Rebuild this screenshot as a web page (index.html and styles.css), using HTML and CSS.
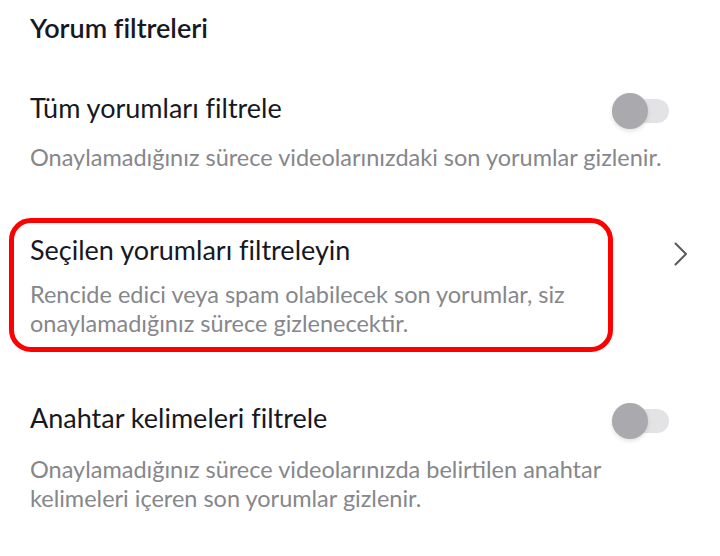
FILE: index.html
```html
<!DOCTYPE html>
<html lang="tr">
<head>
<meta charset="utf-8">
<link rel="stylesheet" href="styles.css">
</head>
<body>
<main class="page">
  <h1 class="title">Yorum filtreleri</h1>

  <section class="item item-first">
    <div class="row">
      <div class="heading">Tüm yorumları filtrele</div>
      <span class="toggle"><span class="knob"></span></span>
    </div>
    <p class="desc">Onaylamadığınız sürece videolarınızdaki son yorumlar gizlenir.</p>
  </section>

  <section class="item item-link">
    <div class="highlight">
      <div class="heading">Seçilen yorumları filtreleyin</div>
      <p class="desc">Rencide edici veya spam olabilecek son yorumlar, siz onaylamadığınız sürece gizlenecektir.</p>
    </div>
    <svg class="chevron" width="14" height="24" viewBox="0 0 14 24"><path d="M1.5 1.5 L12 12 L1.5 22.5" fill="none" stroke="#5a5a5e" stroke-width="2" stroke-linecap="round" stroke-linejoin="round"/></svg>
  </section>

  <section class="item item-last">
    <div class="row">
      <div class="heading">Anahtar kelimeleri filtrele</div>
      <span class="toggle"><span class="knob"></span></span>
    </div>
    <p class="desc">Onaylamadığınız sürece videolarınızda belirtilen anahtar kelimeleri içeren son yorumlar gizlenir.</p>
  </section>
</main>
</body>
</html>
```

FILE: styles.css
```css
* { box-sizing: border-box; }
html, body { margin: 0; padding: 0; background: #fff; }
body {
  font-family: "Lato", "Open Sans", sans-serif;
  color: #161823;
  width: 720px;
  height: 556px;
  overflow: hidden;
}
.page {
  padding: 11px 51px 0 30px;
  display: flex;
  flex-direction: column;
}
.title {
  margin: 0;
  font-size: 27px;
  font-weight: 600;
  line-height: 34px;
  color: #161823;
}
.item { display: flex; flex-direction: column; }
.row {
  display: flex;
  align-items: center;
  justify-content: space-between;
}
.heading {
  font-size: 27px;
  line-height: 34px;
  font-weight: 400;
  color: #161823;
}
.desc {
  margin: 0;
  font-size: 23.5px;
  line-height: 29px;
  color: #86878b;
}
.item-first { margin-top: 46px; }
.item-first .desc { margin-top: 18px; }
.toggle {
  position: relative;
  width: 57px;
  height: 24px;
  border-radius: 12px;
  background: #e3e3e5;
  flex: none;
  margin-top: 6px;
}
.knob {
  position: absolute;
  left: 0;
  top: 50%;
  width: 36px;
  height: 36px;
  margin-top: -18px;
  border-radius: 50%;
  background: #a9a9ae;
  box-shadow: 0 2px 4px rgba(0,0,0,0.12);
}
.item-link {
  flex-direction: row;
  align-items: flex-start;
  justify-content: space-between;
  margin-top: 46px;
}
.highlight {
  margin-left: -21px;
  width: 604px;
  border: 5px solid #fe0000;
  border-radius: 22px;
  padding: 10px 16px 9px;
}
.highlight .desc { margin-top: 13px; }
.chevron { margin-top: 24px; margin-right: -19px; flex: none; }
.item-last { margin-top: 49px; }
.item-last .desc { margin-top: 20px; }
```
